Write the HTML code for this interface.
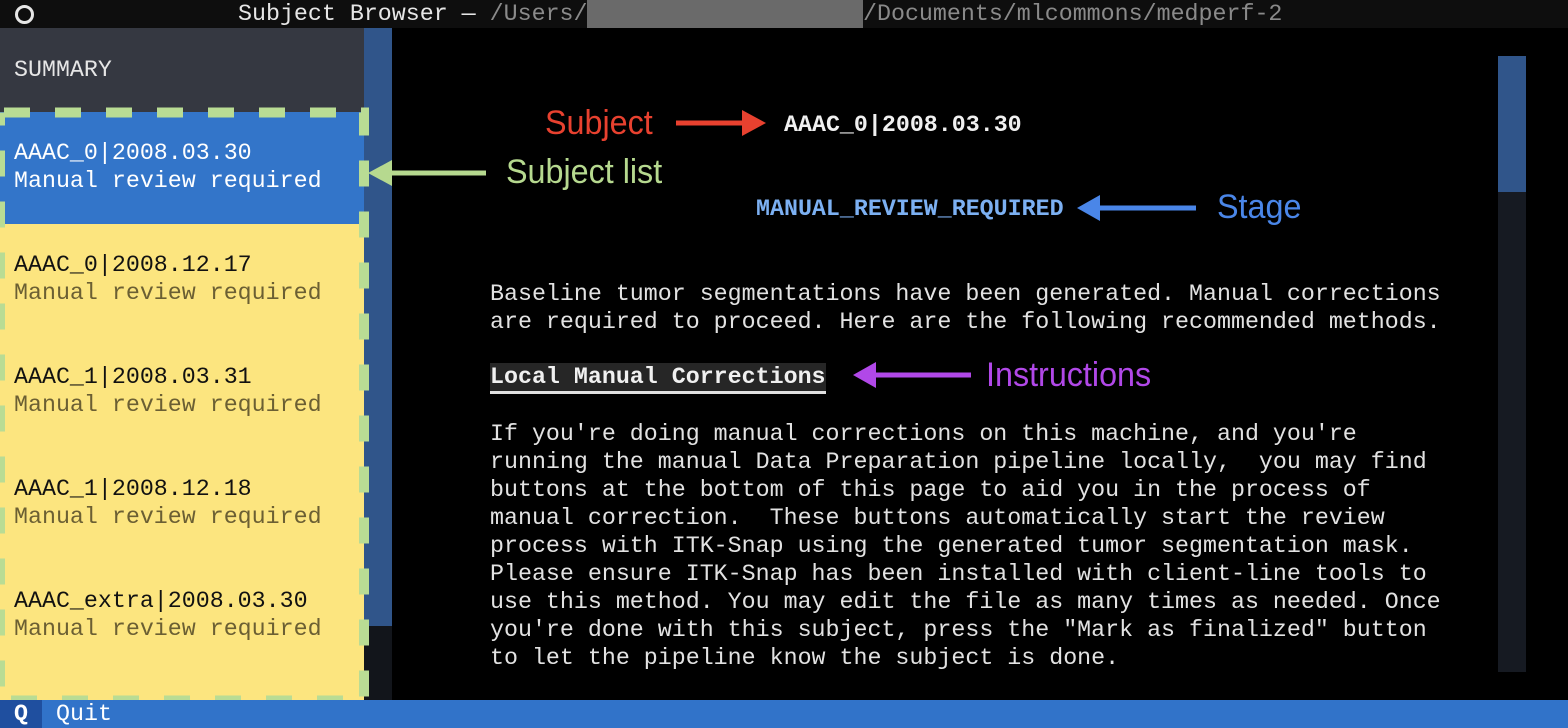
<!DOCTYPE html>
<html><head><meta charset="utf-8"><style>
*{margin:0;padding:0;box-sizing:border-box}
body{width:1568px;height:728px;background:#000;position:relative;overflow:hidden;font-family:"DejaVu Sans Mono","Liberation Mono",monospace;font-stretch:condensed;font-size:23.3px;color:#e2e2e2}
.a{position:absolute;white-space:pre;line-height:28px;height:28px;font-family:"Liberation Mono",monospace}
.ann{position:absolute;font-family:"Liberation Sans",sans-serif;font-size:34px;line-height:40px;white-space:pre;transform:scaleX(0.95);transform-origin:left center}
</style></head><body>
<div style="position:absolute;left:0;top:0;width:1568px;height:28px;background:#0e0e0e"></div>
<div style="position:absolute;left:15px;top:5px;width:19px;height:19px;border:3px solid #e6e6e6;border-radius:50%"></div>
<div class="a" style="left:238px;top:0;color:#e6e6e6">Subject Browser — <span style="color:#8a8a8a">/Users/</span></div>
<div style="position:absolute;left:587px;top:0;width:276px;height:28px;background:#6a6a6a"></div>
<div class="a" style="left:863px;top:0;color:#8a8a8a">/Documents/mlcommons/medperf-2</div>

<div style="position:absolute;left:0;top:28px;width:364px;height:84px;background:#353841"></div>
<div class="a" style="left:14px;top:56px;color:#e6e6e6">SUMMARY</div>
<div style="position:absolute;left:364px;top:28px;width:28px;height:598px;background:#30558a"></div>
<div style="position:absolute;left:364px;top:626px;width:28px;height:74px;background:#12151b"></div>
<div style="position:absolute;left:0;top:112px;width:364px;height:112px;background:#3375c9"></div>
<div style="position:absolute;left:0;top:224px;width:364px;height:476px;background:#fce57f"></div>
<svg style="position:absolute;left:0;top:0" width="400" height="728">
<rect x="0" y="112.5" width="364" height="588" fill="none" stroke="#b9dc94" stroke-width="10" stroke-dasharray="26 25" stroke-dashoffset="-4"/>
</svg>

<div class="a" style="left:14px;top:139px;color:#fff">AAAC_0|2008.03.30</div>
<div class="a" style="left:14px;top:167px;color:#fff">Manual review required</div>
<div class="a" style="left:14px;top:251px;color:#111">AAAC_0|2008.12.17</div>
<div class="a" style="left:14px;top:279px;color:#6b5f33">Manual review required</div>
<div class="a" style="left:14px;top:363px;color:#111">AAAC_1|2008.03.31</div>
<div class="a" style="left:14px;top:391px;color:#6b5f33">Manual review required</div>
<div class="a" style="left:14px;top:475px;color:#111">AAAC_1|2008.12.18</div>
<div class="a" style="left:14px;top:503px;color:#6b5f33">Manual review required</div>
<div class="a" style="left:14px;top:587px;color:#111">AAAC_extra|2008.03.30</div>
<div class="a" style="left:14px;top:615px;color:#6b5f33">Manual review required</div>

<div style="position:absolute;left:1498px;top:56px;width:28px;height:136px;background:#30558a"></div>
<div style="position:absolute;left:1498px;top:192px;width:28px;height:480px;background:#161a22"></div>

<div class="a" style="left:784px;top:111px;color:#f0f0f0;font-weight:bold">AAAC_0|2008.03.30</div>
<div class="a" style="left:756px;top:195px;color:#7cb0f2;font-weight:bold">MANUAL_REVIEW_REQUIRED</div>
<div class="a" style="left:490px;top:280px">Baseline tumor segmentations have been generated. Manual corrections</div>
<div class="a" style="left:490px;top:308px">are required to proceed. Here are the following recommended methods.</div>
<div class="a" style="left:490px;top:363px;width:336px;background:#262626;color:#f0f0f0;font-weight:bold;border-bottom:3px solid #e0e0e0;height:31px">Local Manual Corrections</div>
<div class="a" style="left:490px;top:420px">If you're doing manual corrections on this machine, and you're</div>
<div class="a" style="left:490px;top:448px">running the manual Data Preparation pipeline locally,  you may find</div>
<div class="a" style="left:490px;top:476px">buttons at the bottom of this page to aid you in the process of</div>
<div class="a" style="left:490px;top:504px">manual correction.  These buttons automatically start the review</div>
<div class="a" style="left:490px;top:532px">process with ITK-Snap using the generated tumor segmentation mask.</div>
<div class="a" style="left:490px;top:560px">Please ensure ITK-Snap has been installed with client-line tools to</div>
<div class="a" style="left:490px;top:588px">use this method. You may edit the file as many times as needed. Once</div>
<div class="a" style="left:490px;top:616px">you're done with this subject, press the "Mark as finalized" button</div>
<div class="a" style="left:490px;top:644px">to let the pipeline know the subject is done.</div>

<div style="position:absolute;left:0;top:700px;width:1568px;height:28px;background:#3173c9"></div>
<div style="position:absolute;left:0;top:700px;width:42px;height:28px;background:#1f4f9f"></div>
<div class="a" style="left:14px;top:700px;color:#fff;font-weight:bold">Q</div>
<div class="a" style="left:56px;top:700px;color:#fff">Quit</div>

<svg style="position:absolute;left:0;top:0" width="1568" height="728">
<line x1="676" y1="123" x2="745" y2="123" stroke="#e8412f" stroke-width="5"/>
<polygon points="742,110 766,123 742,136" fill="#e8412f"/>
<line x1="392" y1="173" x2="486" y2="173" stroke="#b6d98f" stroke-width="5"/>
<polygon points="392,160 368,173 392,186" fill="#b6d98f"/>
<line x1="1100" y1="208" x2="1196" y2="208" stroke="#4a86e8" stroke-width="5"/>
<polygon points="1100,195 1077,208 1100,221" fill="#4a86e8"/>
<line x1="876" y1="375" x2="971" y2="375" stroke="#b148e8" stroke-width="5"/>
<polygon points="876,362 853,375 876,388" fill="#b148e8"/>
</svg>
<div class="ann" style="left:545px;top:103px;color:#e8412f">Subject</div>
<div class="ann" style="left:506px;top:152px;color:#b6d98f">Subject list</div>
<div class="ann" style="left:1217px;top:187px;color:#4a86e8">Stage</div>
<div class="ann" style="left:986px;top:355px;color:#b148e8">Instructions</div>
</body></html>
